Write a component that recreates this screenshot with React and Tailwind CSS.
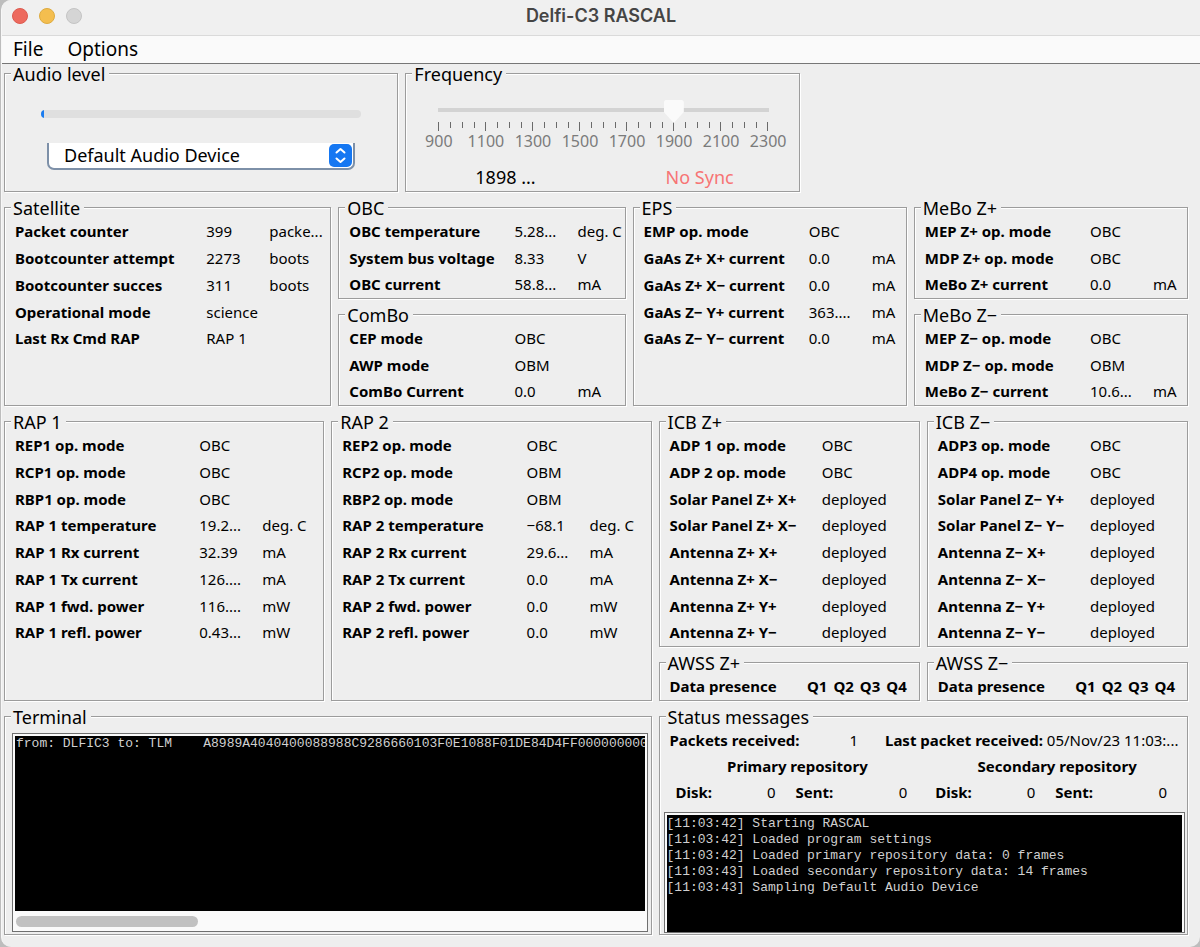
const satellite = [
  ["Packet counter", "399", "packe..."],
  ["Bootcounter attempt", "2273", "boots"],
  ["Bootcounter succes", "311", "boots"],
  ["Operational mode", "science", ""],
  ["Last Rx Cmd RAP", "RAP 1", ""],
];
const obc = [
  ["OBC temperature", "5.28...", "deg. C"],
  ["System bus voltage", "8.33", "V"],
  ["OBC current", "58.8...", "mA"],
];
const combo = [
  ["CEP mode", "OBC", ""],
  ["AWP mode", "OBM", ""],
  ["ComBo Current", "0.0", "mA"],
];
const eps = [
  ["EMP op. mode", "OBC", ""],
  ["GaAs Z+ X+ current", "0.0", "mA"],
  ["GaAs Z+ X− current", "0.0", "mA"],
  ["GaAs Z− Y+ current", "363....", "mA"],
  ["GaAs Z− Y− current", "0.0", "mA"],
];
const meboPlus = [
  ["MEP Z+ op. mode", "OBC", ""],
  ["MDP Z+ op. mode", "OBC", ""],
  ["MeBo Z+ current", "0.0", "mA"],
];
const meboMinus = [
  ["MEP Z− op. mode", "OBC", ""],
  ["MDP Z− op. mode", "OBM", ""],
  ["MeBo Z− current", "10.6...", "mA"],
];
const rap1 = [
  ["REP1 op. mode", "OBC", ""],
  ["RCP1 op. mode", "OBC", ""],
  ["RBP1 op. mode", "OBC", ""],
  ["RAP 1 temperature", "19.2...", "deg. C"],
  ["RAP 1 Rx current", "32.39", "mA"],
  ["RAP 1 Tx current", "126....", "mA"],
  ["RAP 1 fwd. power", "116....", "mW"],
  ["RAP 1 refl. power", "0.43...", "mW"],
];
const rap2 = [
  ["REP2 op. mode", "OBC", ""],
  ["RCP2 op. mode", "OBM", ""],
  ["RBP2 op. mode", "OBM", ""],
  ["RAP 2 temperature", "−68.1", "deg. C"],
  ["RAP 2 Rx current", "29.6...", "mA"],
  ["RAP 2 Tx current", "0.0", "mA"],
  ["RAP 2 fwd. power", "0.0", "mW"],
  ["RAP 2 refl. power", "0.0", "mW"],
];
const icbPlus = [
  ["ADP 1 op. mode", "OBC"],
  ["ADP 2 op. mode", "OBC"],
  ["Solar Panel Z+ X+", "deployed"],
  ["Solar Panel Z+ X−", "deployed"],
  ["Antenna Z+ X+", "deployed"],
  ["Antenna Z+ X−", "deployed"],
  ["Antenna Z+ Y+", "deployed"],
  ["Antenna Z+ Y−", "deployed"],
];
const icbMinus = [
  ["ADP3 op. mode", "OBC"],
  ["ADP4 op. mode", "OBC"],
  ["Solar Panel Z− Y+", "deployed"],
  ["Solar Panel Z− Y−", "deployed"],
  ["Antenna Z− X+", "deployed"],
  ["Antenna Z− X−", "deployed"],
  ["Antenna Z− Y+", "deployed"],
  ["Antenna Z− Y−", "deployed"],
];

const frame =
  "from: DLFIC3 to: TLM    A8989A4040400088988C9286660103F0E1088F01DE84D4FF0000000000";

const log = [
  "[11:03:42] Starting RASCAL",
  "[11:03:42] Loaded program settings",
  "[11:03:42] Loaded primary repository data: 0 frames",
  "[11:03:43] Loaded secondary repository data: 14 frames",
  "[11:03:43] Sampling Default Audio Device",
];

const scale = [900, 1100, 1300, 1500, 1700, 1900, 2100, 2300];
const ticks = Array.from({ length: 29 }, (_, i) => i);
const quadrants = ["Q1", "Q2", "Q3", "Q4"];

function Panel({ title, className = "", children }) {
  return (
    <section
      className={`flex min-w-0 flex-col border border-[#9c9c9c] shadow-[1px_1px_0_#fff,inset_1px_1px_0_#fff] ${className}`}
    >
      <h2 className="-mt-[9px] ml-1.5 h-[19px] w-fit bg-[#eee] pr-1 pl-0.5 text-[18px] leading-[19px] whitespace-nowrap">
        {title}
      </h2>
      {children}
    </section>
  );
}

function Readings({ rows, height, last = "w-[61px]" }) {
  return (
    <table className={`w-full table-fixed border-collapse text-left ${height}`}>
      <colgroup>
        <col />
        {rows[0].length === 3 && <col className="w-[63px]" />}
        <col className={last} />
      </colgroup>
      <tbody>
        {rows.map(([name, ...cells]) => (
          <tr key={name}>
            <th scope="row" className="p-0 pl-2.5 font-bold whitespace-nowrap">
              {name}
            </th>
            {cells.map((cell, i) => (
              <td key={i} className="p-0 whitespace-nowrap">
                {cell}
              </td>
            ))}
          </tr>
        ))}
      </tbody>
    </table>
  );
}

function Presence({ title }) {
  return (
    <Panel title={title}>
      <div className="flex h-[27px] items-center justify-between pr-3 pl-2.5 font-bold whitespace-nowrap">
        <span>Data presence</span>
        <span className="flex gap-1.5">
          {quadrants.map((q) => (
            <span key={q}>{q}</span>
          ))}
        </span>
      </div>
    </Panel>
  );
}

function Repository({ title, inset }) {
  return (
    <div className={`flex-1 ${inset}`}>
      <h3 className="pl-3 text-center leading-[26px] font-bold">{title}</h3>
      <dl className="flex gap-5 leading-[26px]">
        <div className="flex w-[100px] justify-between">
          <dt className="font-bold">Disk:</dt>
          <dd>0</dd>
        </div>
        <div className="flex flex-1 justify-between">
          <dt className="font-bold">Sent:</dt>
          <dd>0</dd>
        </div>
      </dl>
    </div>
  );
}

function AudioPanel() {
  return (
    <Panel title="Audio level" className="h-[119px]">
      <div className="flex flex-col px-9 pt-[26px]">
        <progress
          aria-label="Audio level"
          max="100"
          value="1"
          className="h-2 w-full appearance-none overflow-hidden rounded-full [&::-webkit-progress-bar]:bg-[#dfdfdf] [&::-webkit-progress-value]:bg-[#1a7cf0]"
        />
        <div className="relative mt-[25px] mr-1.5 ml-1.5">
          <select
            aria-label="Audio device"
            className="block h-[27px] w-full appearance-none rounded-b-[7px] border-2 border-t-0 border-[#7d90a8] bg-white pl-[15px] text-[18px] leading-[25px] outline-none"
          >
            <option>Default Audio Device</option>
          </select>
          <svg
            viewBox="0 0 23 23"
            className="pointer-events-none absolute top-px right-[3px] size-[23px]"
            fill="none"
            aria-hidden="true"
          >
            <rect width="23" height="23" rx="5" fill="#1577f2" />
            <path
              d="M7.500 8.500 11.500 5 15.500 8.500M7.500 14.500 11.500 18 15.500 14.500"
              stroke="#fff"
              strokeWidth="2"
              strokeLinecap="round"
              strokeLinejoin="round"
            />
          </svg>
        </div>
      </div>
    </Panel>
  );
}

function FrequencyPanel() {
  return (
    <Panel title="Frequency" className="h-[119px]">
      <div className="pt-4 pr-5 pl-[22px]">
        <input
          type="range"
          aria-label="Frequency"
          min="900"
          max="2300"
          defaultValue="1898"
          className="block h-[23px] w-full appearance-none bg-[linear-gradient(#d3d3d3,#d3d3d3)] bg-[length:calc(100%-20px)_4px] bg-[position:center_8px] bg-no-repeat [&::-webkit-slider-thumb]:h-[23px] [&::-webkit-slider-thumb]:w-5 [&::-webkit-slider-thumb]:appearance-none [&::-webkit-slider-thumb]:bg-[#fafafa] [&::-webkit-slider-thumb]:[clip-path:polygon(8%_0,92%_0,100%_8%,100%_52%,50%_100%,0_52%,0_8%)]"
        />
        <div className="-mt-px flex justify-between px-2.5">
          {ticks.map((i) => (
            <span
              key={i}
              className={i % 4 ? "h-1.5 w-px bg-[#6a6a6a]" : "h-[9px] w-px bg-[#6a6a6a]"}
            />
          ))}
        </div>
        <div className="flex justify-between px-2.5 text-[16px] leading-5 text-[#7b7b7b]">
          {scale.map((v) => (
            <span key={v} className="flex w-px justify-center">
              {v}
            </span>
          ))}
        </div>
      </div>
      <div className="mt-3.5 flex justify-around text-[18px] leading-6">
        <output className="pl-1">1898 ...</output>
        <span>
          <span className="text-[#f77474]">No Sync</span>
        </span>
      </div>
    </Panel>
  );
}

export default function App() {
  return (
    <div className="flex min-h-screen flex-col bg-[#bdbdbd] pl-px font-['Noto_Sans','Open_Sans',sans-serif] text-[15px] text-black">
      <div className="flex flex-1 flex-col rounded-tl-[10px] rounded-b-[10px] border-l border-[#f7f7f7] bg-[#eee]">
        <header className="relative flex h-9 items-center justify-center rounded-tl-[10px] border-b border-[#dadada] bg-[#f0f0f0] pb-1">
          <div className="absolute left-2.5 flex gap-[11px]">
            <button aria-label="Close" className="size-4 rounded-full border border-[#dd5b50] bg-[#ed6a5e]" />
            <button aria-label="Minimize" className="size-4 rounded-full border border-[#deab3f] bg-[#f4be4f]" />
            <button aria-label="Zoom" className="size-4 rounded-full border border-[#c4c4c4] bg-[#d5d5d5]" />
          </div>
          <h1 className="font-['Inter',sans-serif] text-[18px] font-semibold text-[#454545]">Delfi-C3 RASCAL</h1>
        </header>
        <nav className="flex h-7 items-center gap-6 border-b border-[#767676] bg-[#fafafa] pl-[11px] text-[19px]">
          <button>File</button>
          <button>Options</button>
        </nav>

        <main className="flex flex-1 flex-col gap-[15px] pt-[9px] pr-3 pb-3 pl-0.5">
          <div className="grid grid-cols-[394fr_394fr_381fr] gap-[7px]">
            <AudioPanel />
            <FrequencyPanel />
          </div>

          <div className="grid grid-cols-[327fr_287fr_274fr_274fr] gap-[7px]">
            <Panel title="Satellite">
              <Readings rows={satellite} height="h-[134px]" />
            </Panel>
            <div className="flex flex-col gap-[15px]">
              <Panel title="OBC">
                <Readings rows={obc} height="h-20" last="w-[47px]" />
              </Panel>
              <Panel title="ComBo">
                <Readings rows={combo} height="h-20" last="w-[47px]" />
              </Panel>
            </div>
            <Panel title="EPS">
              <Readings rows={eps} height="h-[134px]" last="w-[34px]" />
            </Panel>
            <div className="flex flex-col gap-[15px]">
              <Panel title="MeBo Z+">
                <Readings rows={meboPlus} height="h-20" last="w-[34px]" />
              </Panel>
              <Panel title="MeBo Z−">
                <Readings rows={meboMinus} height="h-20" last="w-[34px]" />
              </Panel>
            </div>
          </div>

          <div className="grid grid-cols-[320fr_320fr_261fr_261fr] gap-[7px]">
            <Panel title="RAP 1">
              <Readings rows={rap1} height="h-[214px]" />
            </Panel>
            <Panel title="RAP 2">
              <Readings rows={rap2} height="h-[214px]" />
            </Panel>
            <div className="flex flex-col gap-[15px]">
              <Panel title="ICB Z+">
                <Readings rows={icbPlus} height="h-[214px]" last="w-[97px]" />
              </Panel>
              <Presence title="AWSS Z+" />
            </div>
            <div className="flex flex-col gap-[15px]">
              <Panel title="ICB Z−">
                <Readings rows={icbMinus} height="h-[214px]" last="w-[97px]" />
              </Panel>
              <Presence title="AWSS Z−" />
            </div>
          </div>

          <div className="grid flex-1 grid-cols-[647fr_529fr] gap-[7px]">
            <Panel title="Terminal">
              <div className="mt-1.5 mr-[3px] mb-0.5 ml-[7px] flex flex-1 flex-col border border-[#6f6f6f] bg-[#fafafa] p-0.5 pb-0">
                <pre className="flex-1 overflow-hidden bg-black pl-px font-['Liberation_Mono',monospace] text-[13px] leading-4 text-[#d0d0d0]">
                  {frame}
                </pre>
                <div className="flex h-5 items-center px-px">
                  <div className="h-[11px] w-[29%] rounded-full bg-[#c1c1c1]" />
                </div>
              </div>
            </Panel>
            <Panel title="Status messages">
              <div className="flex pl-2.5 leading-[26px] whitespace-nowrap">
                <b>Packets received:</b>
                <span className="ml-auto pr-[27px]">1</span>
                <span className="w-[302px]">
                  <b>Last packet received:</b> 05/Nov/23 11:03:...
                </span>
              </div>
              <div className="flex">
                <Repository title="Primary repository" inset="pr-5 pl-4" />
                <Repository title="Secondary repository" inset="pr-5 pl-2" />
              </div>
              <div className="mx-1 mt-[7px] mr-0.5 mb-px flex flex-1 flex-col border border-[#6f6f6f] bg-[#fafafa] p-0.5 pb-0">
                <pre className="flex-1 overflow-hidden bg-black pt-px font-['Liberation_Mono',monospace] text-[13px] leading-4 text-[#d0d0d0]">
                  {log.join("\n")}
                </pre>
              </div>
            </Panel>
          </div>
        </main>
      </div>
    </div>
  );
}
